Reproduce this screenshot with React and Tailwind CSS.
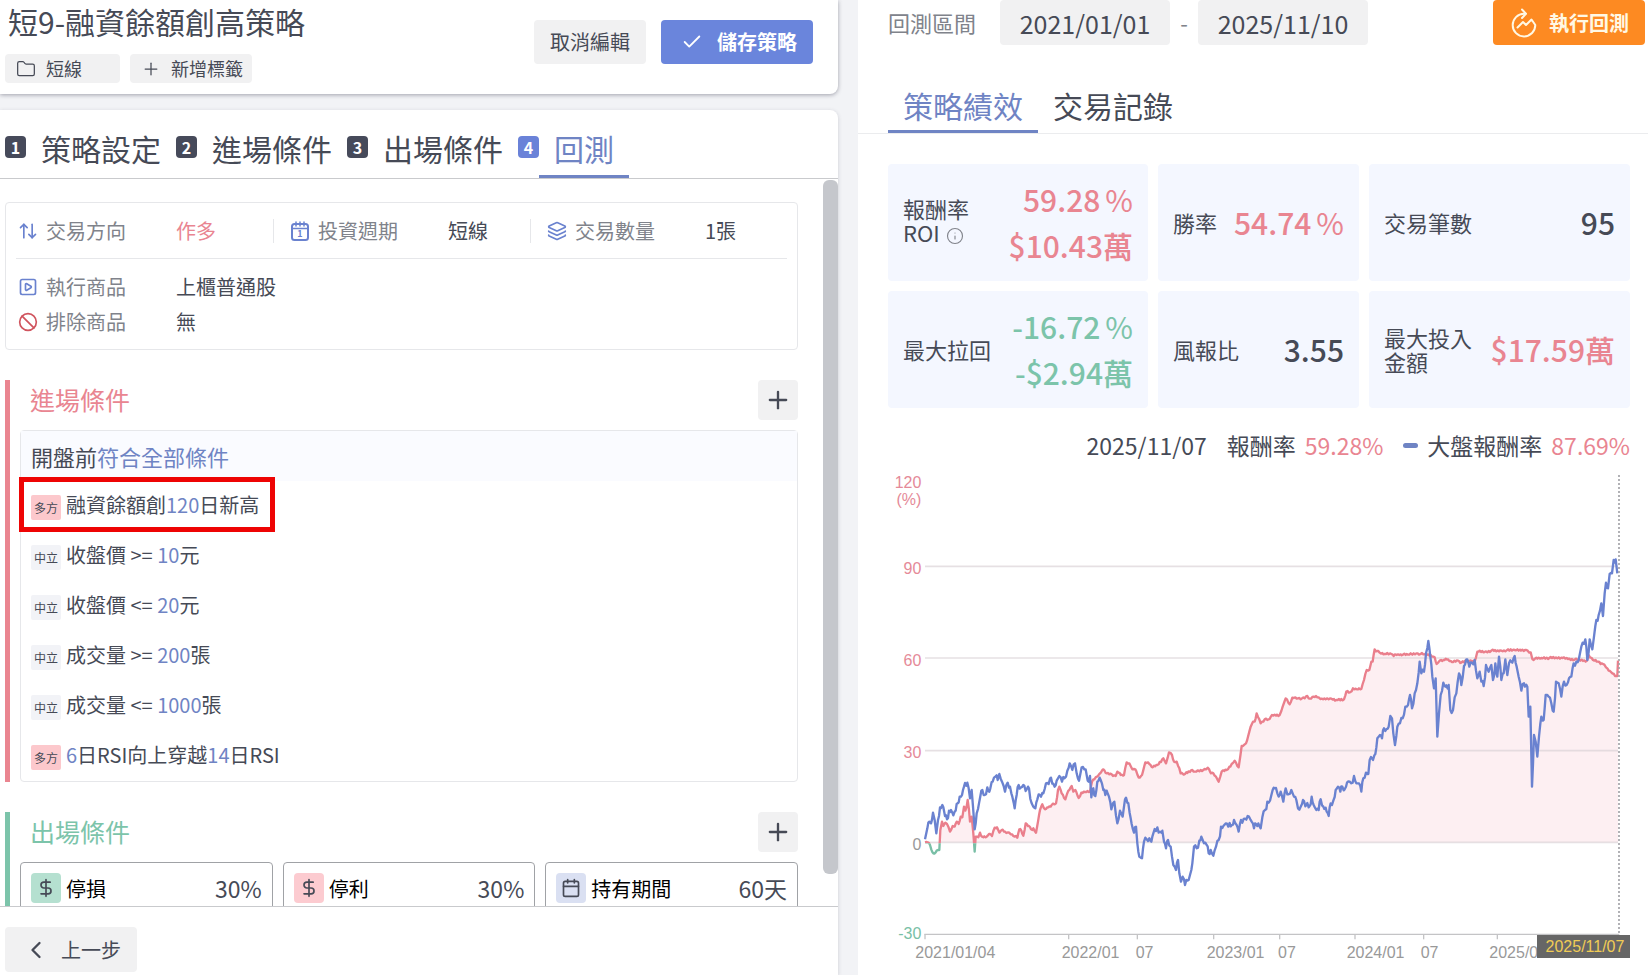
import React from 'react';
import {
    ArrowUpDown, Ban, Calendar, Check, ChevronLeft, DollarSign, Folder, Info, Layers, Plus, SquarePlay,
} from 'lucide-react';

const steps = ['策略設定', '進場條件', '出場條件', '回測'];

const entryRules = [
    { side: '多方', before: '融資餘額創', value: '120', after: '日新高', marked: true },
    { side: '中立', before: '收盤價 >= ', value: '10', after: '元' },
    { side: '中立', before: '收盤價 <= ', value: '20', after: '元' },
    { side: '中立', before: '成交量 >= ', value: '200', after: '張' },
    { side: '中立', before: '成交量 <= ', value: '1000', after: '張' },
    { side: '多方', before: '', value: '6', after: '日RSI向上穿越', value2: '14', after2: '日RSI' },
];

const exitRules = [
    { label: '停損', value: '30%', icon: DollarSign, box: 'bg-[#b5e0d0]' },
    { label: '停利', value: '30%', icon: DollarSign, box: 'bg-[#fccbd0]' },
    { label: '持有期間', value: '60天', icon: Calendar, box: 'bg-[#dae0f2]' },
];

// Chart space: 3 units per pixel, zero line at y = 1147.
const ZERO_Y = 1147;
const LATE_X = 1104;

const strategyEarly = '135,1147 143,1147 150,1155 157,1176 163,1181 170,1172 178,1170 181,1110 186,1085 190,1098 196,1088 205,1100 210,1115 218,1098 224,1100 230,1085 236,1092 242,1070 247,1072 252,1040 256,1052 263,1020 267,1050 270,1085 275,1070 280,1120 284,1175 287,1130 295,1132 300,1118 306,1130 320,1130 330,1122 336,1128 344,1103 351,1102 358,1118 365,1110 375,1115 388,1118 400,1128 412,1133 418,1108 424,1112 430,1127 437,1090 447,1098 453,1108 460,1105 468,1118 474,1085 480,1050 487,1033 495,1048 505,1042 515,1035 528,1030 534,990 538,980 545,1000 556,1018 565,992 575,978 580,995 586,990 596,1014 604,998 615,996 630,995 636,965 650,950 660,940 670,928 680,940 695,943 707,948 712,935 722,945 732,945 740,907 748,910 757,928 766,928 776,953 786,945 796,907 808,912 818,922 832,915 850,895 858,910 867,877 876,885 882,905 890,905 902,940 915,942 937,930 945,935 970,930 983,923 990,935 1000,940 1008,950 1016,965 1025,935 1040,930 1055,912 1064,902 1076,922 1085,858 1098,850';
const strategyLate = '0,830 8,800 15,785 20,785 26,760 38,790 50,778 62,778 72,765 95,765 104,740 113,715 125,733 133,713 150,715 170,715 178,708 185,716 197,710 208,712 225,718 250,716 265,720 288,718 295,695 306,697 315,685 326,688 340,687 348,660 356,630 364,630 370,605 374,605 380,568 395,578 410,582 430,582 437,588 450,583 480,584 505,580 530,583 548,585 560,592 566,612 575,602 590,600 600,598 612,606 630,602 640,608 655,602 680,605 688,575 710,576 730,572 760,572 800,570 835,570 848,577 853,597 880,594 940,593 960,597 1017,602 1022,585 1035,600 1050,605 1065,612 1078,625 1090,637 1104,648 1108,648 1110,602';
const marketEarly = '135,1138 142,1105 148,1085 153,1090 159,1058 164,1080 169,1120 174,1080 180,1042 190,1042 195,1068 201,1078 207,1052 213,1050 220,1066 227,1052 233,1030 239,1010 246,1005 252,980 262,968 266,985 270,1015 275,990 279,1040 284,1108 290,1060 297,1030 304,992 314,1005 322,982 328,995 338,965 346,950 353,960 358,942 366,965 375,995 383,968 390,980 397,1010 404,1045 410,1005 416,975 422,983 430,975 440,988 447,985 455,1030 460,1040 466,1045 472,1018 480,1005 490,1000 498,970 506,972 513,953 524,980 530,962 538,948 546,965 553,955 562,932 569,910 577,930 585,910 590,940 597,962 605,922 613,928 620,945 626,965 630,948 634,1012 640,985 646,1008 652,965 662,960 670,990 676,1005 680,992 687,1010 694,1048 703,1025 712,1090 720,1052 728,1070 735,1018 745,1030 752,1075 758,1105 762,1118 768,1100 772,1150 778,1190 786,1195 792,1145 800,1138 808,1135 814,1145 820,1120 832,1102 840,1115 847,1112 852,1145 858,1165 864,1140 872,1160 880,1215 888,1230 894,1200 898,1240 903,1265 908,1250 915,1275 922,1262 930,1245 937,1210 942,1160 950,1165 958,1142 964,1130 972,1150 980,1155 986,1180 992,1170 1000,1187 1008,1160 1016,1140 1023,1100 1030,1098 1037,1090 1045,1100 1056,1095 1062,1080 1070,1095 1076,1115 1083,1080 1095,1076';
const marketLate = '3,1070 11,1085 18,1105 24,1092 31,1090 38,1105 43,1072 51,1050 58,1025 66,1022 74,990 80,985 88,1000 92,1010 98,995 106,1025 113,985 122,1003 130,990 138,1010 145,1020 150,1045 158,1040 165,1020 175,1035 185,1038 191,1010 197,1035 205,1050 212,1050 218,1018 226,1040 236,1055 242,1068 248,1030 256,1022 263,990 270,980 277,995 283,980 290,988 297,968 305,965 310,970 318,948 325,970 333,970 340,995 346,955 354,938 361,942 365,900 372,895 382,882 388,835 396,825 402,835 408,805 415,808 422,800 427,768 432,775 436,820 441,855 448,800 456,790 464,775 472,740 480,735 486,705 492,745 500,700 508,670 515,605 520,640 528,635 534,580 541,543 547,590 553,650 558,685 563,655 568,830 573,760 578,705 586,668 592,680 602,675 607,750 615,750 620,712 625,700 633,640 640,675 648,618 658,598 664,620 672,608 680,600 688,655 695,635 700,665 707,678 714,615 722,635 730,615 735,660 742,610 748,650 753,590 760,660 767,640 772,598 778,645 783,610 790,605 800,588 806,620 812,650 820,692 828,670 838,680 842,770 847,740 852,980 858,825 863,845 868,890 873,830 880,770 887,780 893,705 902,710 910,730 917,755 924,665 932,670 940,710 948,665 956,675 963,655 970,650 977,610 985,605 992,600 1000,560 1012,538 1018,600 1025,538 1033,568 1038,530 1045,480 1052,465 1060,430 1065,468 1070,400 1074,368 1080,385 1085,342 1092,340 1097,300 1103,298 1108,340';

function parse(text, dx) {
    return text.split(' ').map((pair) => {
        const [x, y] = pair.split(',').map(Number);
        return [x + dx, y];
    });
}

// Adds small daily swings between the main turning points.
function withSwings(points, size) {
    const out = [points[0]];
    for (let i = 1; i < points.length; i++) {
        const [x0, y0] = points[i - 1];
        const [x1, y1] = points[i];
        const parts = Math.max(1, Math.round((x1 - x0) / 4));
        for (let k = 1; k < parts; k++) {
            const swing = (((i * 7 + k * 5) % 9) - 4) / 4;
            out.push([x0 + ((x1 - x0) * k) / parts, y0 + ((y1 - y0) * k) / parts + swing * size]);
        }
        out.push([x1, y1]);
    }
    return out.map(([x, y]) => `${Math.round(x)},${Math.round(y)}`).join(' ');
}

const strategyLine = withSwings([...parse(strategyEarly, 0), ...parse(strategyLate, LATE_X)], 3);
const marketLine = withSwings([...parse(marketEarly, 0), ...parse(marketLate, LATE_X)], 9);

const yLabels = [
    { text: '120', y: 84, color: 'fill-[#e58a98]' },
    { text: '(%)', y: 134, color: 'fill-[#e58a98]' },
    { text: '90', y: 341, color: 'fill-[#e58a98]' },
    { text: '60', y: 617, color: 'fill-[#e58a98]' },
    { text: '30', y: 894, color: 'fill-[#e58a98]' },
    { text: '0', y: 1171, color: 'fill-[#999999]' },
    { text: '-30', y: 1436, color: 'fill-[#79bfa6]' },
];

const xLabels = [
    { text: '2021/01/04', x: 106, tick: 135 },
    { text: '2022/01', x: 545, tick: 566 },
    { text: '07', x: 767, tick: 772 },
    { text: '2023/01', x: 980, tick: 1001 },
    { text: '07', x: 1194, tick: 1199 },
    { text: '2024/01', x: 1400, tick: 1425 },
    { text: '07', x: 1622, tick: 1631 },
    { text: '2025/01', x: 1828, tick: 1852 },
];

function Chart() {
    return (
        <svg viewBox="24 30 2226 1510" className="block w-full font-['Liberation_Sans',sans-serif]" role="img" aria-label="報酬率">
            <defs>
                <clipPath id="gain"><rect x="130" y="30" width="2090" height={ZERO_Y - 27} /></clipPath>
                <clipPath id="loss"><rect x="130" y={ZERO_Y + 3} width="2090" height="300" /></clipPath>
            </defs>
            <polygon points={`135,${ZERO_Y} ${strategyLine} 2214,${ZERO_Y}`} fill="#fdeff2" clipPath="url(#gain)" />
            {[319, 594, 872, ZERO_Y].map((y) => (
                <line key={y} x1="135" x2="2214" y1={y} y2={y} stroke="#d8d0d4" strokeOpacity="0.65" strokeWidth="5" />
            ))}
            <line x1="133" x2="2218" y1="1423" y2="1423" stroke="#c4c4c6" strokeWidth="4" />
            {xLabels.map(({ tick }) => (
                <line key={tick} x1={tick} x2={tick} y1="1423" y2="1438" stroke="#c4c4c6" strokeWidth="4" />
            ))}
            <g fill="none" strokeWidth="7" strokeLinejoin="round">
                <polyline points={strategyLine} stroke="#ea7f8c" clipPath="url(#gain)" />
                <polyline points={strategyLine} stroke="#79bfa6" clipPath="url(#loss)" />
                <polyline points={marketLine} stroke="#6a82d0" />
            </g>
            <line x1="2217" x2="2217" y1="45" y2="1420" stroke="#a3a3a8" strokeWidth="5" strokeDasharray="6 6" />
            {yLabels.map(({ text, y, color }) => (
                <text key={text} x="124" y={y} textAnchor="end" fontSize="48" className={color}>{text}</text>
            ))}
            {xLabels.map(({ text, x, tick }) => (
                <text key={tick} x={x} y="1494" fontSize="48" className="fill-[#999999]">{text}</text>
            ))}
            <rect x="1971" y="1425" width="279" height="69" fill="#666666" />
            <text x="2115" y="1475" textAnchor="middle" fontSize="48" className="fill-[#f0cc55]">2025/11/07</text>
        </svg>
    );
}

function RunIcon() {
    return (
        <svg width="26" height="30" viewBox="0 0 26 30" fill="none" stroke="currentColor" strokeWidth="2" strokeLinecap="round" strokeLinejoin="round" aria-hidden="true">
            <path d="M14.5 5.8H13A11.3 11.3 0 1 0 24.3 17L20.5 11.5L15 17L12 14L6.5 19.5" />
            <path d="M11 1.5L15 5.8L11 10" />
        </svg>
    );
}

function PeriodIcon() {
    return (
        <svg width="20" height="20" viewBox="0 0 20 20" fill="none" stroke="currentColor" strokeWidth="2" strokeLinecap="round" aria-hidden="true">
            <rect x="2" y="3" width="16" height="16" rx="2.5" />
            <path d="M2 7.5h16M6 1v4M10 1v4M14 1v4" strokeWidth="1.5" />
            <text x="10" y="16" textAnchor="middle" fontSize="9" fontWeight="700" fill="currentColor" stroke="none">1</text>
        </svg>
    );
}

function SummaryItem({ icon, label, value, valueClass = '' }) {
    return (
        <div className="flex items-center">
            <span className="flex w-[30px] shrink-0 pl-[2px] text-[#6a82cf]">{icon}</span>
            <span className="w-[130px] shrink-0 text-[#80838b]">{label}</span>
            <span className={valueClass}>{value}</span>
        </div>
    );
}

function SectionHead({ title, color }) {
    return (
        <div className="mb-[10px] flex h-10 items-center justify-between">
            <h2 className={`pl-[10px] text-[25px] ${color}`}>{title}</h2>
            <button type="button" aria-label={`新增${title}`} className="flex size-10 items-center justify-center rounded bg-[#f1f1f2]">
                <Plus size={28} strokeWidth={2} />
            </button>
        </div>
    );
}

function StatCard({ label, children }) {
    return (
        <div className="flex min-h-[117px] items-center justify-between rounded bg-[#f4f7ff] px-[15px] pb-[2px]">
            <div className="text-[22px] leading-6">{label}</div>
            <div className="shrink-0 text-right text-[30px] leading-[46px] font-medium">{children}</div>
        </div>
    );
}

function Percent({ value }) {
    return (
        <div>
            {value}
            <span className="ml-[5px] font-normal">%</span>
        </div>
    );
}

export default function App() {
    return (
        <div className="grid h-screen grid-cols-[838fr_790fr] gap-5 overflow-hidden bg-[#f2f3f6] font-['Noto_Sans_CJK_TC',sans-serif] text-[#464a56]">
            <div className="flex min-h-0 min-w-0 flex-col gap-4">
                <header className="flex h-[94px] shrink-0 items-start justify-between rounded-br-lg bg-white pr-[25px] pl-[5px] shadow-[0_1px_4px_rgba(60,60,80,0.45)]">
                    <div>
                        <h1 className="pt-[3px] pl-[3px] text-[30px] leading-9">短9-融資餘額創高策略</h1>
                        <div className="mt-[15px] flex gap-[10px] text-[18px]">
                            <button type="button" className="flex h-[29px] w-[115px] items-center gap-[10px] rounded bg-[#f1f1f2] pl-[11px]">
                                <Folder size={20} strokeWidth={1.5} />
                                短線
                            </button>
                            <button type="button" className="flex h-[29px] items-center gap-[10px] rounded bg-[#f1f1f2] pr-[9px] pl-[11px]">
                                <Plus size={20} strokeWidth={1.5} />
                                新增標籤
                            </button>
                        </div>
                    </div>
                    <div className="flex gap-[15px] pt-5 text-[20px]">
                        <button type="button" className="h-11 rounded bg-[#f1f1f2] px-4">取消編輯</button>
                        <button type="button" className="flex h-11 items-center gap-[14px] rounded bg-[#6a85dc] pr-4 pl-5 font-bold text-white">
                            <Check size={22} strokeWidth={2} />
                            儲存策略
                        </button>
                    </div>
                </header>

                <main className="flex min-h-0 flex-1 flex-col rounded-tr-lg bg-white shadow-[0_1px_4px_rgba(60,60,80,0.2)]">
                    <nav className="flex h-[69px] shrink-0 border-b border-[#c9cacd] pl-[5px]">
                        {steps.map((step, i) => {
                            const active = i === 3;
                            return (
                                <div key={step} className="flex">
                                    <span className={`mt-[26px] flex h-[22px] w-[21px] items-center justify-center rounded text-[16px] leading-none font-bold text-white ${active ? 'bg-[#6a82d8]' : 'bg-[#464a5a]'}`}>
                                        {i + 1}
                                    </span>
                                    <button type="button" className={`border-b-3 px-[15px] pt-[10px] text-[30px] leading-[54px] ${active ? 'border-[#6f84c4] text-[#6f84c4]' : 'border-transparent'}`}>
                                        {step}
                                    </button>
                                </div>
                            );
                        })}
                    </nav>

                    <div className="flex min-h-0 flex-1">
                        <div className="min-w-0 flex-1 overflow-hidden pt-[23px] pr-[25px] pl-[5px]">
                            <section className="rounded border border-[#e6e7ea] px-[10px] pb-[10px] text-[20px]">
                                <div className="grid h-[56px] grid-cols-3 items-center border-b border-[#e6e7ea]">
                                    <SummaryItem icon={<ArrowUpDown size={20} strokeWidth={2} />} label="交易方向" value="作多" valueClass="text-[#e98591]" />
                                    <div className="border-l border-[#e6e7ea] pl-[14px] leading-6">
                                        <SummaryItem icon={<PeriodIcon />} label="投資週期" value="短線" />
                                    </div>
                                    <div className="border-l border-[#e6e7ea] pl-[14px] leading-6">
                                        <SummaryItem icon={<Layers size={20} strokeWidth={2} />} label="交易數量" value="1張" />
                                    </div>
                                </div>
                                <div className="flex flex-col pt-[10px] leading-[35px]">
                                    <SummaryItem icon={<SquarePlay size={20} strokeWidth={2} />} label="執行商品" value="上櫃普通股" />
                                    <SummaryItem icon={<Ban size={20} strokeWidth={2} className="text-[#d0545e]" />} label="排除商品" value="無" />
                                </div>
                            </section>

                            <section className="mt-[30px] border-l-5 border-[#ea8590] pl-[10px]">
                                <SectionHead title="進場條件" color="text-[#e98591]" />
                                <div className="rounded border border-[#e6e7ea]">
                                    <div className="flex h-[50px] items-center bg-[#fafbff] pl-[10px] text-[22px]">
                                        開盤前<span className="text-[#6f84c4]">符合全部條件</span>
                                    </div>
                                    <ul>
                                        {entryRules.map((rule) => (
                                            <li key={rule.side + rule.before + rule.value} className="relative flex h-[50px] items-center gap-[5px] pl-[10px] text-[20px]">
                                                {rule.marked && <span className="absolute -top-1 -left-[2px] h-[55px] w-[256px] border-5 border-[#ee0404]" />}
                                                <span className={`mt-[2px] flex h-[25px] w-[30px] items-center justify-center rounded-xs pt-[2px] text-[12px] ${rule.side === '多方' ? 'bg-[#fcc8cc]' : 'bg-[#f2f3f7]'}`}>
                                                    {rule.side}
                                                </span>
                                                <span className="pb-[3px] whitespace-pre">
                                                    {rule.before}
                                                    <span className="text-[#6f84c4]">{rule.value}</span>
                                                    {rule.after}
                                                    {rule.value2 && <span className="text-[#6f84c4]">{rule.value2}</span>}
                                                    {rule.after2}
                                                </span>
                                            </li>
                                        ))}
                                    </ul>
                                </div>
                            </section>

                            <section className="mt-[30px] border-l-5 border-[#7cc4aa] pl-[10px]">
                                <SectionHead title="出場條件" color="text-[#7cc4aa]" />
                                <div className="grid grid-cols-3 gap-[10px]">
                                    {exitRules.map(({ label, value, icon: Icon, box }) => (
                                        <div key={label} className="flex h-[70px] items-start rounded border border-[#a0a2a6] px-[10px] pt-[10px]">
                                            <span className={`flex size-[30px] items-center justify-center rounded ${box}`}>
                                                <Icon size={20} strokeWidth={2} />
                                            </span>
                                            <span className="ml-[5px] text-[20px] leading-8 text-black">{label}</span>
                                            <span className="ml-auto text-[23px] leading-[30px]">{value}</span>
                                        </div>
                                    ))}
                                </div>
                            </section>
                        </div>
                        <div className="flex w-[15px] shrink-0 flex-col pt-px pb-8">
                            <div className="flex-1 rounded-md bg-[#c5c7cc]" />
                        </div>
                    </div>

                    <footer className="h-[69px] shrink-0 border-t border-[#c9cacd] pt-5 pl-[5px]">
                        <button type="button" className="flex h-[45px] w-[132px] items-center gap-[11px] rounded bg-[#f1f1f2] pl-[17px] text-[20px]">
                            <ChevronLeft size={28} strokeWidth={2} />
                            上一步
                        </button>
                    </footer>
                </main>
            </div>

            <div className="min-w-0 bg-white">
                <div className="flex h-[45px] items-center pr-[3px] pl-[30px] text-[25px]">
                    <label htmlFor="from" className="text-[22px] text-[#80838b]">回測區間</label>
                    <input id="from" type="text" defaultValue="2021/01/01" className="ml-6 h-full w-[170px] rounded bg-[#f1f1f2] text-center" />
                    <span className="w-7 text-center text-[22px] text-[#80838b]">-</span>
                    <input id="to" type="text" aria-label="結束日期" defaultValue="2025/11/10" className="h-full w-[170px] rounded bg-[#f1f1f2] text-center" />
                    <button type="button" className="ml-auto flex h-full items-center gap-3 rounded bg-[#fd8a22] pr-4 pl-[18px] text-[20px] font-bold text-[#fff8e4]">
                        <RunIcon />
                        執行回測
                    </button>
                </div>

                <div className="mt-[34px] flex border-b border-[#ebecee] pl-[30px] text-[30px] leading-[49px]">
                    <button type="button" className="border-b-3 border-[#6f84c4] px-[15px] pt-[2px] text-[#6f84c4]">策略績效</button>
                    <button type="button" className="border-b-3 border-transparent px-[15px] pt-[2px]">交易記錄</button>
                </div>

                <div className="mt-[30px] pr-[18px] pl-[30px]">
                    <div className="grid grid-cols-[260fr_201fr_261fr] gap-[10px]">
                        <StatCard label={<>報酬率<br />ROI <Info size={20} strokeWidth={1.5} className="inline pb-[2px] text-[#80838b]" /></>}>
                            <div className="text-[#e98591]"><Percent value="59.28" />$10.43萬</div>
                        </StatCard>
                        <StatCard label="勝率"><div className="text-[#e98591]"><Percent value="54.74" /></div></StatCard>
                        <StatCard label="交易筆數">95</StatCard>
                        <StatCard label="最大拉回">
                            <div className="text-[#7cc4aa]"><Percent value="-16.72" />-$2.94萬</div>
                        </StatCard>
                        <StatCard label="風報比">3.55</StatCard>
                        <StatCard label={<>最大投入<br />金額</>}><span className="text-[#e98591]">$17.59萬</span></StatCard>
                    </div>

                    <div className="flex h-[62px] items-center justify-end pt-3 text-[23px]">
                        <span>2025/11/07</span>
                        <span className="ml-5">報酬率</span>
                        <span className="ml-[9px] text-[#e98591]">59.28%</span>
                        <span className="ml-5 h-[5px] w-[15px] rounded-full bg-[#6f84c4]" />
                        <span className="ml-[9px]">大盤報酬率</span>
                        <span className="ml-[9px] text-[#e98591]">87.69%</span>
                    </div>

                    <Chart />
                </div>
            </div>
        </div>
    );
}
